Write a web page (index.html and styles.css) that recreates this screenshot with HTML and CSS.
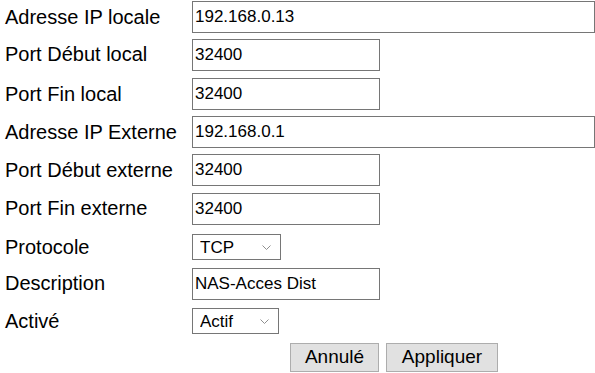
FILE: index.html
```html
<!DOCTYPE html>
<html lang="fr">
<head>
	<meta charset="UTF-8">
	<title>Redirection de port</title>
	<link rel="stylesheet" href="styles.css">
</head>
<body>
	<form class="nat-form">
		<label class="lbl" for="ipLocal">Adresse IP locale</label>
		<div class="field"><input type="text" id="ipLocal" class="txt long" value="192.168.0.13"></div>

		<label class="lbl" for="portDebLocal">Port Début local</label>
		<div class="field"><input type="text" id="portDebLocal" class="txt short" value="32400"></div>

		<label class="lbl" for="portFinLocal">Port Fin local</label>
		<div class="field"><input type="text" id="portFinLocal" class="txt short" value="32400"></div>

		<label class="lbl" for="ipExt">Adresse IP Externe</label>
		<div class="field"><input type="text" id="ipExt" class="txt long" value="192.168.0.1"></div>

		<label class="lbl" for="portDebExt">Port Début externe</label>
		<div class="field"><input type="text" id="portDebExt" class="txt short" value="32400"></div>

		<label class="lbl" for="portFinExt">Port Fin externe</label>
		<div class="field"><input type="text" id="portFinExt" class="txt short" value="32400"></div>

		<label class="lbl" for="proto">Protocole</label>
		<div class="field">
			<span class="sel-wrap proto">
				<select id="proto" class="sel">
					<option>TCP</option>
					<option>UDP</option>
					<option>TCP/UDP</option>
				</select>
				<svg class="chev" width="9" height="5" viewBox="0 0 9 5"><path d="M0.5 0.5 L4.5 4.5 L8.5 0.5" fill="none" stroke="#8f8f8f" stroke-width="1"/></svg>
			</span>
		</div>

		<label class="lbl" for="desc">Description</label>
		<div class="field"><input type="text" id="desc" class="txt short" value="NAS-Acces Dist"></div>

		<label class="lbl" for="actif">Activé</label>
		<div class="field">
			<span class="sel-wrap etat">
				<select id="actif" class="sel">
					<option>Actif</option>
					<option>Inactif</option>
				</select>
				<svg class="chev" width="9" height="5" viewBox="0 0 9 5"><path d="M0.5 0.5 L4.5 4.5 L8.5 0.5" fill="none" stroke="#8f8f8f" stroke-width="1"/></svg>
			</span>
		</div>

		<div class="actions">
			<input type="button" value="Annulé" class="btn btn-cancel">
			<input type="button" value="Appliquer" class="btn btn-apply">
		</div>
	</form>
</body>
</html>
```

FILE: styles.css
```css
*{margin:0px;padding:0px;box-sizing:border-box;}
body{
	background: #fff;
	color: #000;
	font-family: "Liberation Sans", Arial, sans-serif;
	overflow: hidden;
}
.nat-form{
	display: grid;
	grid-template-columns: 187px 403px;
	grid-template-rows: 34px 41px 38px 38px 38px 39px 38px 35px 40px 32px;
	align-items: center;
	padding-left: 5px;
}
.nat-form .lbl{
	font-size: 20px;
	line-height: 23px;
	white-space: nowrap;
}
.nat-form .field{
	display: flex;
	align-items: center;
}
.nat-form .txt{
	height: 32px;
	border: 1px solid #767676;
	padding: 0 2px;
	font-family: "Liberation Sans", Arial, sans-serif;
	font-size: 17px;
	color: #000;
	background: #fff;
	outline: none;
}
.nat-form .long{
	width: 403px;
}
.nat-form .short{
	width: 188px;
}
.sel-wrap{
	position: relative;
	display: inline-block;
}
.sel-wrap .sel{
	-webkit-appearance: none;
	appearance: none;
	width: 100%;
	height: 26px;
	border: 1px solid #767676;
	border-radius: 0;
	background: #fff;
	padding: 0 0 0 7px;
	font-family: "Liberation Sans", Arial, sans-serif;
	font-size: 17px;
	color: #000;
	outline: none;
}
.sel-wrap.proto{
	width: 89px;
}
.sel-wrap.etat{
	width: 87px;
}
.sel-wrap .chev{
	position: absolute;
	right: 10px;
	top: 11px;
	pointer-events: none;
}
.actions{
	grid-column: 2;
	display: flex;
	justify-content: center;
	gap: 7px;
	padding-left: 1px;
}
.actions .btn{
	height: 29px;
	border: 1px solid #adadad;
	background: #e1e1e1;
	font-family: "Liberation Sans", Arial, sans-serif;
	font-size: 19px;
	color: #000;
	padding: 0;
	text-align: center;
}
.btn-cancel{
	width: 89px;
}
.btn-apply{
	width: 112px;
}
```
